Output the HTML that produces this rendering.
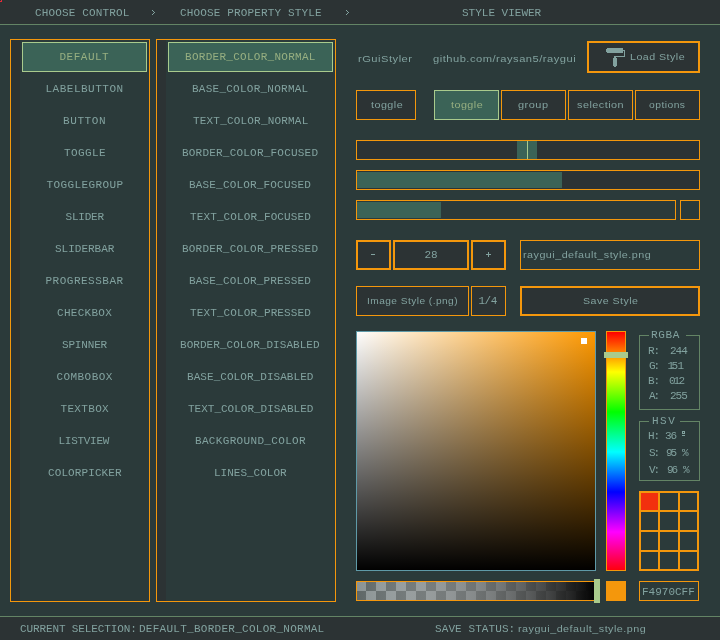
<!DOCTYPE html>
<html><head><meta charset="utf-8"><style>
html,body{margin:0;padding:0;width:720px;height:640px;overflow:hidden;background:#2b3a3a;}
.r{position:absolute;box-sizing:border-box;}
.t{position:absolute;line-height:14px;white-space:pre;transform-origin:0 0;}
</style></head><body>
<div class="r" style="left:0px;top:0px;width:720px;height:24px;background:#2c3334;"></div><div class="r" style="left:0px;top:24px;width:720px;height:1px;background:#638465;"></div><div class="r" style="left:0px;top:616px;width:720px;height:1px;background:#638465;"></div><div class="r" style="left:0px;top:617px;width:720px;height:23px;background:#2c3334;"></div><div class="r" style="left:152px;top:10px;width:1px;height:1px;background:#82a29f;"></div><div class="r" style="left:153px;top:11px;width:1px;height:1px;background:#82a29f;"></div><div class="r" style="left:154px;top:12px;width:1px;height:1px;background:#82a29f;"></div><div class="r" style="left:153px;top:13px;width:1px;height:1px;background:#82a29f;"></div><div class="r" style="left:152px;top:14px;width:1px;height:1px;background:#82a29f;"></div><div class="r" style="left:346px;top:10px;width:1px;height:1px;background:#82a29f;"></div><div class="r" style="left:347px;top:11px;width:1px;height:1px;background:#82a29f;"></div><div class="r" style="left:348px;top:12px;width:1px;height:1px;background:#82a29f;"></div><div class="r" style="left:347px;top:13px;width:1px;height:1px;background:#82a29f;"></div><div class="r" style="left:346px;top:14px;width:1px;height:1px;background:#82a29f;"></div><div class="r" style="left:11px;top:40px;width:9px;height:561px;background:#2c3334;"></div><div class="r" style="left:10px;top:39px;width:140px;height:563px;box-shadow:inset 0 0 0 1px #f4970c;"></div><div class="r" style="left:22px;top:42px;width:125px;height:30px;background:#3b6357;box-shadow:inset 0 0 0 1px #a9cb8d;"></div><div class="r" style="left:157px;top:40px;width:9px;height:561px;background:#2c3334;"></div><div class="r" style="left:156px;top:39px;width:180px;height:563px;box-shadow:inset 0 0 0 1px #f4970c;"></div><div class="r" style="left:168px;top:42px;width:165px;height:30px;background:#3b6357;box-shadow:inset 0 0 0 1px #a9cb8d;"></div><div class="r" style="left:587px;top:41px;width:113px;height:32px;background:#2c3334;box-shadow:inset 0 0 0 2px #f4970c;"></div><div class="r" style="left:607px;top:48px;width:16px;height:1px;background:#82a29f;"></div><div class="r" style="left:606px;top:49px;width:17px;height:1px;background:#82a29f;"></div><div class="r" style="left:606px;top:50px;width:19px;height:1px;background:#82a29f;"></div><div class="r" style="left:606px;top:51px;width:17px;height:1px;background:#82a29f;"></div><div class="r" style="left:624px;top:51px;width:1px;height:1px;background:#82a29f;"></div><div class="r" style="left:607px;top:52px;width:16px;height:1px;background:#82a29f;"></div><div class="r" style="left:624px;top:52px;width:1px;height:1px;background:#82a29f;"></div><div class="r" style="left:624px;top:53px;width:1px;height:1px;background:#82a29f;"></div><div class="r" style="left:624px;top:54px;width:1px;height:1px;background:#82a29f;"></div><div class="r" style="left:624px;top:55px;width:1px;height:1px;background:#82a29f;"></div><div class="r" style="left:614px;top:56px;width:11px;height:1px;background:#82a29f;"></div><div class="r" style="left:614px;top:57px;width:2px;height:1px;background:#82a29f;"></div><div class="r" style="left:613px;top:58px;width:4px;height:1px;background:#82a29f;"></div><div class="r" style="left:613px;top:59px;width:4px;height:1px;background:#82a29f;"></div><div class="r" style="left:613px;top:60px;width:4px;height:1px;background:#82a29f;"></div><div class="r" style="left:613px;top:61px;width:4px;height:1px;background:#82a29f;"></div><div class="r" style="left:613px;top:62px;width:4px;height:1px;background:#82a29f;"></div><div class="r" style="left:613px;top:63px;width:4px;height:1px;background:#82a29f;"></div><div class="r" style="left:613px;top:64px;width:4px;height:1px;background:#82a29f;"></div><div class="r" style="left:613px;top:65px;width:4px;height:1px;background:#82a29f;"></div><div class="r" style="left:614px;top:66px;width:2px;height:1px;background:#82a29f;"></div><div class="r" style="left:356px;top:90px;width:60px;height:30px;background:#2c3334;box-shadow:inset 0 0 0 1px #f4970c;"></div><div class="r" style="left:434px;top:90px;width:65px;height:30px;background:#3b6357;box-shadow:inset 0 0 0 1px #a9cb8d;"></div><div class="r" style="left:501px;top:90px;width:65px;height:30px;background:#2c3334;box-shadow:inset 0 0 0 1px #f4970c;"></div><div class="r" style="left:568px;top:90px;width:65px;height:30px;background:#2c3334;box-shadow:inset 0 0 0 1px #f4970c;"></div><div class="r" style="left:635px;top:90px;width:65px;height:30px;background:#2c3334;box-shadow:inset 0 0 0 1px #f4970c;"></div><div class="r" style="left:356px;top:140px;width:344px;height:20px;background:#2c3334;box-shadow:inset 0 0 0 1px #f4970c;"></div><div class="r" style="left:517px;top:141px;width:20px;height:18px;background:#3b6357;"></div><div class="r" style="left:527px;top:141px;width:1px;height:18px;background:#a9cb8d;"></div><div class="r" style="left:356px;top:170px;width:344px;height:20px;background:#2c3334;box-shadow:inset 0 0 0 1px #f4970c;"></div><div class="r" style="left:357px;top:172px;width:205px;height:16px;background:#3b6357;"></div><div class="r" style="left:356px;top:200px;width:320px;height:20px;box-shadow:inset 0 0 0 1px #f4970c;"></div><div class="r" style="left:357px;top:202px;width:84px;height:16px;background:#3b6357;"></div><div class="r" style="left:680px;top:200px;width:20px;height:20px;box-shadow:inset 0 0 0 1px #f4970c;"></div><div class="r" style="left:356px;top:240px;width:35px;height:30px;background:#2c3334;box-shadow:inset 0 0 0 2px #f4970c;"></div><div class="r" style="left:371px;top:254px;width:4px;height:1px;background:#82a29f;"></div><div class="r" style="left:393px;top:240px;width:76px;height:30px;background:#2c3334;box-shadow:inset 0 0 0 2px #f4970c;"></div><div class="r" style="left:471px;top:240px;width:35px;height:30px;background:#2c3334;box-shadow:inset 0 0 0 2px #f4970c;"></div><div class="r" style="left:486px;top:254px;width:5px;height:1px;background:#82a29f;"></div><div class="r" style="left:488px;top:252px;width:1px;height:5px;background:#82a29f;"></div><div class="r" style="left:520px;top:240px;width:180px;height:30px;box-shadow:inset 0 0 0 1px #f4970c;"></div><div class="r" style="left:356px;top:286px;width:113px;height:30px;background:#2c3334;box-shadow:inset 0 0 0 1px #f4970c;"></div><div class="r" style="left:471px;top:286px;width:35px;height:30px;background:#2c3334;box-shadow:inset 0 0 0 1px #f4970c;"></div><div class="r" style="left:520px;top:286px;width:180px;height:30px;background:#2c3334;box-shadow:inset 0 0 0 2px #f4970c;"></div><div class="r" style="left:356px;top:331px;width:240px;height:240px;background:linear-gradient(to bottom,rgba(0,0,0,0),#000),linear-gradient(to right,#fff,#ff9900);"></div><div class="r" style="left:356px;top:331px;width:240px;height:240px;box-shadow:inset 0 0 0 1px #5f9aa8;"></div><div class="r" style="left:581px;top:338px;width:6px;height:6px;background:#fff;"></div><div class="r" style="left:606px;top:331px;width:20px;height:240px;background:linear-gradient(to bottom,#f00 1px,#ff0 41px,#0f0 81px,#0ff 121px,#00f 161px,#f0f 201px,#f00 241px);"></div><div class="r" style="left:606px;top:331px;width:20px;height:240px;box-shadow:inset 0 0 0 1px #f4970c;"></div><div class="r" style="left:604px;top:352px;width:24px;height:6px;background:#a9cb8d;"></div><div class="r" style="left:356px;top:581px;width:240px;height:20px;background:linear-gradient(to right,rgba(255,255,255,0.00) 0%,rgba(230,230,230,0.10) 10%,rgba(204,204,204,0.20) 20%,rgba(178,178,178,0.30) 30%,rgba(153,153,153,0.40) 40%,rgba(128,128,128,0.50) 50%,rgba(102,102,102,0.60) 60%,rgba(77,77,77,0.70) 70%,rgba(51,51,51,0.80) 80%,rgba(25,25,25,0.90) 90%,rgba(0,0,0,1.00) 100%),repeating-conic-gradient(#5e6666 0 25%,#8b9394 0 50%) 0 0/20px 20px;"></div><div class="r" style="left:356px;top:581px;width:240px;height:20px;box-shadow:inset 0 0 0 1px #f4970c;"></div><div class="r" style="left:594px;top:579px;width:6px;height:24px;background:#a9cb8d;"></div><div class="r" style="left:606px;top:581px;width:20px;height:20px;background:#f4970c;"></div><div class="r" style="left:639px;top:335px;width:61px;height:1px;background:#638465;"></div><div class="r" style="left:639px;top:335px;width:1px;height:75px;background:#638465;"></div><div class="r" style="left:699px;top:335px;width:1px;height:75px;background:#638465;"></div><div class="r" style="left:639px;top:409px;width:61px;height:1px;background:#638465;"></div><div class="r" style="left:649px;top:334px;width:37px;height:3px;background:#2b3a3a;"></div><div class="r" style="left:639px;top:421px;width:61px;height:1px;background:#638465;"></div><div class="r" style="left:639px;top:421px;width:1px;height:60px;background:#638465;"></div><div class="r" style="left:699px;top:421px;width:1px;height:60px;background:#638465;"></div><div class="r" style="left:639px;top:480px;width:61px;height:1px;background:#638465;"></div><div class="r" style="left:649px;top:420px;width:31px;height:3px;background:#2b3a3a;"></div><div class="r" style="left:682px;top:431px;width:3px;height:1px;background:#82a29f;"></div><div class="r" style="left:682px;top:433px;width:3px;height:1px;background:#82a29f;"></div><div class="r" style="left:682px;top:432px;width:1px;height:1px;background:#82a29f;"></div><div class="r" style="left:684px;top:432px;width:1px;height:1px;background:#82a29f;"></div><div class="r" style="left:682px;top:435px;width:3px;height:1px;background:#82a29f;"></div><div class="r" style="left:641px;top:493px;width:17px;height:17px;background:#f2300e;"></div><div class="r" style="left:639px;top:491px;width:2px;height:80px;background:#f4970c;"></div><div class="r" style="left:658px;top:491px;width:2px;height:80px;background:#f4970c;"></div><div class="r" style="left:678px;top:491px;width:2px;height:80px;background:#f4970c;"></div><div class="r" style="left:697px;top:491px;width:2px;height:80px;background:#f4970c;"></div><div class="r" style="left:639px;top:491px;width:60px;height:2px;background:#f4970c;"></div><div class="r" style="left:639px;top:510px;width:60px;height:2px;background:#f4970c;"></div><div class="r" style="left:639px;top:530px;width:60px;height:2px;background:#f4970c;"></div><div class="r" style="left:639px;top:550px;width:60px;height:2px;background:#f4970c;"></div><div class="r" style="left:639px;top:569px;width:60px;height:2px;background:#f4970c;"></div><div class="r" style="left:639px;top:581px;width:60px;height:20px;box-shadow:inset 0 0 0 1px #f4970c;"></div><div class="r" style="left:-1px;top:-1px;width:3px;height:3px;background:#1e3a3a;box-shadow:inset 0 0 0 1px #e62937;"></div>
<div style="position:absolute;left:0;top:0;width:720px;height:640px;will-change:transform"><div class="t" style="left:35.00px;top:6.00px;letter-spacing:0.154px;color:#82a29f;font-family:'Liberation Mono',monospace;font-size:11px">CHOOSE CONTROL</div><div class="t" style="left:180.00px;top:6.00px;letter-spacing:0.150px;color:#82a29f;font-family:'Liberation Mono',monospace;font-size:11px">CHOOSE PROPERTY STYLE</div><div class="t" style="left:462.00px;top:6.00px;letter-spacing:0.000px;color:#82a29f;font-family:'Liberation Mono',monospace;font-size:11px">STYLE VIEWER</div><div class="t" style="left:20.00px;top:622.00px;letter-spacing:-0.118px;color:#82a29f;font-family:'Liberation Mono',monospace;font-size:11px">CURRENT SELECTION:</div><div class="t" style="left:139.00px;top:622.00px;letter-spacing:0.269px;color:#82a29f;font-family:'Liberation Mono',monospace;font-size:11px">DEFAULT_BORDER_COLOR_NORMAL</div><div class="t" style="left:435.00px;top:622.00px;letter-spacing:0.091px;color:#82a29f;font-family:'Liberation Mono',monospace;font-size:11px">SAVE STATUS:</div><div class="t" style="left:518.00px;top:622.00px;letter-spacing:0.400px;transform:scaleX(1.1959);color:#82a29f;font-family:'Liberation Sans',sans-serif;font-size:9px">raygui_default_style.png</div><div class="t" style="left:59.50px;top:50.00px;letter-spacing:0.500px;color:#97af81;font-family:'Liberation Mono',monospace;font-size:11px">DEFAULT</div><div class="t" style="left:45.50px;top:82.00px;letter-spacing:0.500px;color:#82a29f;font-family:'Liberation Mono',monospace;font-size:11px">LABELBUTTON</div><div class="t" style="left:63.00px;top:114.00px;letter-spacing:0.600px;color:#82a29f;font-family:'Liberation Mono',monospace;font-size:11px">BUTTON</div><div class="t" style="left:64.00px;top:146.00px;letter-spacing:0.400px;color:#82a29f;font-family:'Liberation Mono',monospace;font-size:11px">TOGGLE</div><div class="t" style="left:46.50px;top:178.00px;letter-spacing:0.400px;color:#82a29f;font-family:'Liberation Mono',monospace;font-size:11px">TOGGLEGROUP</div><div class="t" style="left:65.50px;top:210.00px;letter-spacing:-0.200px;color:#82a29f;font-family:'Liberation Mono',monospace;font-size:11px">SLIDER</div><div class="t" style="left:55.00px;top:242.00px;letter-spacing:0.000px;color:#82a29f;font-family:'Liberation Mono',monospace;font-size:11px">SLIDERBAR</div><div class="t" style="left:45.50px;top:274.00px;letter-spacing:0.500px;color:#82a29f;font-family:'Liberation Mono',monospace;font-size:11px">PROGRESSBAR</div><div class="t" style="left:57.00px;top:306.00px;letter-spacing:0.286px;color:#82a29f;font-family:'Liberation Mono',monospace;font-size:11px">CHECKBOX</div><div class="t" style="left:62.00px;top:338.00px;letter-spacing:-0.167px;color:#82a29f;font-family:'Liberation Mono',monospace;font-size:11px">SPINNER</div><div class="t" style="left:56.50px;top:370.00px;letter-spacing:0.429px;color:#82a29f;font-family:'Liberation Mono',monospace;font-size:11px">COMBOBOX</div><div class="t" style="left:60.50px;top:402.00px;letter-spacing:0.333px;color:#82a29f;font-family:'Liberation Mono',monospace;font-size:11px">TEXTBOX</div><div class="t" style="left:58.50px;top:434.00px;letter-spacing:-0.286px;color:#82a29f;font-family:'Liberation Mono',monospace;font-size:11px">LISTVIEW</div><div class="t" style="left:48.00px;top:466.00px;letter-spacing:0.100px;color:#82a29f;font-family:'Liberation Mono',monospace;font-size:11px">COLORPICKER</div><div class="t" style="left:185.00px;top:50.00px;letter-spacing:0.278px;color:#97af81;font-family:'Liberation Mono',monospace;font-size:11px">BORDER_COLOR_NORMAL</div><div class="t" style="left:192.00px;top:82.00px;letter-spacing:0.250px;color:#82a29f;font-family:'Liberation Mono',monospace;font-size:11px">BASE_COLOR_NORMAL</div><div class="t" style="left:193.00px;top:114.00px;letter-spacing:0.188px;color:#82a29f;font-family:'Liberation Mono',monospace;font-size:11px">TEXT_COLOR_NORMAL</div><div class="t" style="left:182.00px;top:146.00px;letter-spacing:0.211px;color:#82a29f;font-family:'Liberation Mono',monospace;font-size:11px">BORDER_COLOR_FOCUSED</div><div class="t" style="left:189.00px;top:178.00px;letter-spacing:0.176px;color:#82a29f;font-family:'Liberation Mono',monospace;font-size:11px">BASE_COLOR_FOCUSED</div><div class="t" style="left:190.00px;top:210.00px;letter-spacing:0.118px;color:#82a29f;font-family:'Liberation Mono',monospace;font-size:11px">TEXT_COLOR_FOCUSED</div><div class="t" style="left:182.00px;top:242.00px;letter-spacing:0.211px;color:#82a29f;font-family:'Liberation Mono',monospace;font-size:11px">BORDER_COLOR_PRESSED</div><div class="t" style="left:189.00px;top:274.00px;letter-spacing:0.176px;color:#82a29f;font-family:'Liberation Mono',monospace;font-size:11px">BASE_COLOR_PRESSED</div><div class="t" style="left:190.00px;top:306.00px;letter-spacing:0.118px;color:#82a29f;font-family:'Liberation Mono',monospace;font-size:11px">TEXT_COLOR_PRESSED</div><div class="t" style="left:180.00px;top:338.00px;letter-spacing:0.050px;color:#82a29f;font-family:'Liberation Mono',monospace;font-size:11px">BORDER_COLOR_DISABLED</div><div class="t" style="left:187.00px;top:370.00px;letter-spacing:0.056px;color:#82a29f;font-family:'Liberation Mono',monospace;font-size:11px">BASE_COLOR_DISABLED</div><div class="t" style="left:188.00px;top:402.00px;letter-spacing:0.000px;color:#82a29f;font-family:'Liberation Mono',monospace;font-size:11px">TEXT_COLOR_DISABLED</div><div class="t" style="left:195.00px;top:434.00px;letter-spacing:0.333px;color:#82a29f;font-family:'Liberation Mono',monospace;font-size:11px">BACKGROUND_COLOR</div><div class="t" style="left:214.00px;top:466.00px;letter-spacing:0.000px;color:#82a29f;font-family:'Liberation Mono',monospace;font-size:11px">LINES_COLOR</div><div class="t" style="left:358.00px;top:52.00px;letter-spacing:0.400px;transform:scaleX(1.2385);color:#82a29f;font-family:'Liberation Sans',sans-serif;font-size:9px">rGuiStyler</div><div class="t" style="left:433.00px;top:52.00px;letter-spacing:0.400px;transform:scaleX(1.2391);color:#82a29f;font-family:'Liberation Sans',sans-serif;font-size:9px">github.com/raysan5/raygui</div><div class="t" style="left:630.00px;top:50.00px;letter-spacing:0.400px;transform:scaleX(1.1842);color:#82a29f;font-family:'Liberation Sans',sans-serif;font-size:9px">Load Style</div><div class="t" style="left:370.50px;top:98.00px;letter-spacing:0.400px;transform:scaleX(1.1923);color:#82a29f;font-family:'Liberation Sans',sans-serif;font-size:9px">toggle</div><div class="t" style="left:451.00px;top:98.00px;letter-spacing:0.400px;transform:scaleX(1.1923);color:#97af81;font-family:'Liberation Sans',sans-serif;font-size:9px">toggle</div><div class="t" style="left:518.00px;top:98.00px;letter-spacing:0.400px;transform:scaleX(1.2195);color:#82a29f;font-family:'Liberation Sans',sans-serif;font-size:9px">group</div><div class="t" style="left:577.00px;top:98.00px;letter-spacing:0.400px;transform:scaleX(1.2042);color:#82a29f;font-family:'Liberation Sans',sans-serif;font-size:9px">selection</div><div class="t" style="left:649.00px;top:98.00px;letter-spacing:0.400px;transform:scaleX(1.1465);color:#82a29f;font-family:'Liberation Sans',sans-serif;font-size:9px">options</div><div class="t" style="left:424.50px;top:248.00px;letter-spacing:0.000px;color:#82a29f;font-family:'Liberation Mono',monospace;font-size:11px">28</div><div class="t" style="left:523.00px;top:248.00px;letter-spacing:0.400px;transform:scaleX(1.1959);color:#82a29f;font-family:'Liberation Sans',sans-serif;font-size:9px">raygui_default_style.png</div><div class="t" style="left:367.00px;top:294.00px;letter-spacing:0.400px;transform:scaleX(1.1278);color:#82a29f;font-family:'Liberation Sans',sans-serif;font-size:9px">Image Style (.png)</div><div class="t" style="left:478.50px;top:294.00px;letter-spacing:-0.500px;color:#82a29f;font-family:'Liberation Mono',monospace;font-size:11px">1/4</div><div class="t" style="left:583.00px;top:294.00px;letter-spacing:0.400px;transform:scaleX(1.1803);color:#82a29f;font-family:'Liberation Sans',sans-serif;font-size:9px">Save Style</div><div class="t" style="left:651.00px;top:328.00px;letter-spacing:0.667px;color:#82a29f;font-family:'Liberation Mono',monospace;font-size:11px">RGBA</div><div class="t" style="left:648.00px;top:344.00px;letter-spacing:-1.000px;color:#82a29f;font-family:'Liberation Mono',monospace;font-size:11px">R:</div><div class="t" style="left:670.00px;top:344.00px;letter-spacing:-1.000px;color:#82a29f;font-family:'Liberation Mono',monospace;font-size:11px">244</div><div class="t" style="left:649.00px;top:359.00px;letter-spacing:-2.000px;color:#82a29f;font-family:'Liberation Mono',monospace;font-size:11px">G:</div><div class="t" style="left:667.50px;top:359.00px;letter-spacing:0.000px;color:#82a29f;font-family:'Liberation Mono',monospace;font-size:11px">1</div><div class="t" style="left:671.50px;top:359.00px;letter-spacing:0.000px;color:#82a29f;font-family:'Liberation Mono',monospace;font-size:11px">5</div><div class="t" style="left:677.50px;top:359.00px;letter-spacing:0.000px;color:#82a29f;font-family:'Liberation Mono',monospace;font-size:11px">1</div><div class="t" style="left:648.00px;top:374.00px;letter-spacing:-1.000px;color:#82a29f;font-family:'Liberation Mono',monospace;font-size:11px">B:</div><div class="t" style="left:669.00px;top:374.00px;letter-spacing:0.000px;color:#82a29f;font-family:'Liberation Mono',monospace;font-size:11px">0</div><div class="t" style="left:673.50px;top:374.00px;letter-spacing:0.000px;color:#82a29f;font-family:'Liberation Mono',monospace;font-size:11px">1</div><div class="t" style="left:678.50px;top:374.00px;letter-spacing:0.000px;color:#82a29f;font-family:'Liberation Mono',monospace;font-size:11px">2</div><div class="t" style="left:649.00px;top:389.00px;letter-spacing:-2.000px;color:#82a29f;font-family:'Liberation Mono',monospace;font-size:11px">A:</div><div class="t" style="left:670.00px;top:389.00px;letter-spacing:-1.000px;color:#82a29f;font-family:'Liberation Mono',monospace;font-size:11px">255</div><div class="t" style="left:652.00px;top:414.00px;letter-spacing:1.500px;color:#82a29f;font-family:'Liberation Mono',monospace;font-size:11px">HSV</div><div class="t" style="left:648.00px;top:429.00px;letter-spacing:-1.000px;color:#82a29f;font-family:'Liberation Mono',monospace;font-size:11px">H:</div><div class="t" style="left:665.00px;top:429.00px;letter-spacing:-1.000px;color:#82a29f;font-family:'Liberation Mono',monospace;font-size:11px">36</div><div class="t" style="left:649.00px;top:446.00px;letter-spacing:-2.000px;color:#82a29f;font-family:'Liberation Mono',monospace;font-size:11px">S:</div><div class="t" style="left:666.00px;top:446.00px;letter-spacing:-2.000px;color:#82a29f;font-family:'Liberation Mono',monospace;font-size:11px">95</div><div class="t" style="left:649.00px;top:463.00px;letter-spacing:-2.000px;color:#82a29f;font-family:'Liberation Mono',monospace;font-size:11px">V:</div><div class="t" style="left:667.00px;top:463.00px;letter-spacing:-2.000px;color:#82a29f;font-family:'Liberation Mono',monospace;font-size:11px">96</div><div class="t" style="left:682.00px;top:446.00px;letter-spacing:0.000px;color:#82a29f;font-family:'Liberation Mono',monospace;font-size:11px">%</div><div class="t" style="left:683.00px;top:463.00px;letter-spacing:0.000px;color:#82a29f;font-family:'Liberation Mono',monospace;font-size:11px">%</div><div class="t" style="left:642.00px;top:585.00px;letter-spacing:0.000px;color:#82a29f;font-family:'Liberation Mono',monospace;font-size:11px">F4970CFF</div></div>
</body></html>
